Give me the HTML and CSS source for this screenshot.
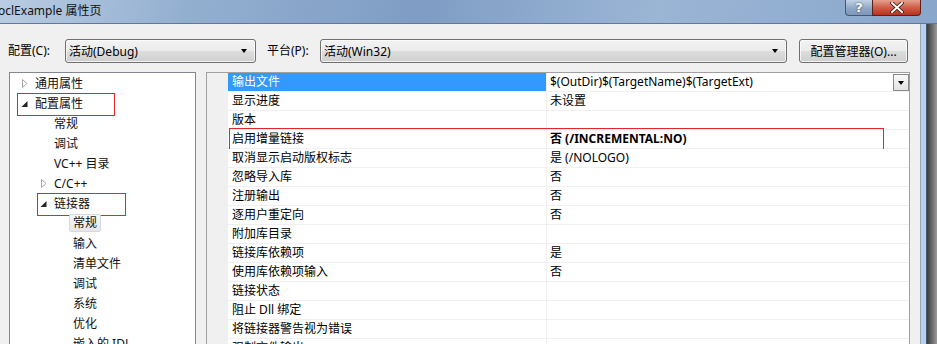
FILE: index.html
```html
<!DOCTYPE html>
<html>
<head>
<title>oclExample 属性页</title>
<link rel="stylesheet" href="styles.css">
</head>
<body>

<div class="titlebar">
  <span class="title">oclExample 属性页</span>
  <div class="caption-buttons">
    <span class="cap-btn help">?</span>
    <span class="cap-btn close">
      <svg width="14" height="11" viewBox="0 0 14 11"><path d="M2 1 L12 10 M12 1 L2 10" stroke="#3a1410" stroke-width="3.6" stroke-linecap="round"/><path d="M2 1 L12 10 M12 1 L2 10" stroke="#fff" stroke-width="2" stroke-linecap="round"/></svg>
    </span>
  </div>
</div>

<div class="main">
  <div class="dialog">

    <div class="toolbar">
      <label class="field-label label-config">配置(C):</label>
      <div class="combo combo-config"><span>活动(Debug)</span><i class="arrow"></i></div>
      <label class="field-label label-platform">平台(P):</label>
      <div class="combo combo-platform"><span>活动(Win32)</span><i class="arrow"></i></div>
      <div class="button">配置管理器(O)...</div>
    </div>

    <div class="panes">
      <div class="tree">
        <div class="node level0"><span class="twisty"><svg width="7" height="9"><path d="M1.5 0.5 L6 4.5 L1.5 8.5 Z" fill="#fff" stroke="#a6a6a6"/></svg></span>通用属性</div>
        <div class="node level0 marked marked-config"><span class="twisty"><svg width="7" height="9"><path d="M6.5 2 L6.5 8 L0.5 8 Z" fill="#262626"/></svg></span>配置属性</div>
        <div class="node level1"><span class="twisty"></span>常规</div>
        <div class="node level1"><span class="twisty"></span>调试</div>
        <div class="node level1"><span class="twisty"></span>VC++ 目录</div>
        <div class="node level1"><span class="twisty"><svg width="7" height="9"><path d="M1.5 0.5 L6 4.5 L1.5 8.5 Z" fill="#fff" stroke="#a6a6a6"/></svg></span>C/C++</div>
        <div class="node level1 marked marked-linker"><span class="twisty"><svg width="7" height="9"><path d="M6.5 2 L6.5 8 L0.5 8 Z" fill="#262626"/></svg></span>链接器</div>
        <div class="node level2"><span class="twisty"></span><span class="current">常规</span></div>
        <div class="node level2"><span class="twisty"></span>输入</div>
        <div class="node level2"><span class="twisty"></span>清单文件</div>
        <div class="node level2"><span class="twisty"></span>调试</div>
        <div class="node level2"><span class="twisty"></span>系统</div>
        <div class="node level2"><span class="twisty"></span>优化</div>
        <div class="node level2"><span class="twisty"></span>嵌入的 IDL</div>
      </div>

      <div class="grid">
        <div class="prop selected">
          <div class="prop-name">输出文件</div>
          <div class="prop-value">$(OutDir)$(TargetName)$(TargetExt)<span class="drop"><i class="arrow"></i></span></div>
        </div>
        <div class="prop"><div class="prop-name">显示进度</div><div class="prop-value">未设置</div></div>
        <div class="prop"><div class="prop-name">版本</div><div class="prop-value"></div></div>
        <div class="prop marked-row"><div class="prop-name">启用增量链接</div><div class="prop-value changed">否 (/INCREMENTAL:NO)</div></div>
        <div class="prop"><div class="prop-name">取消显示启动版权标志</div><div class="prop-value">是 (/NOLOGO)</div></div>
        <div class="prop"><div class="prop-name">忽略导入库</div><div class="prop-value">否</div></div>
        <div class="prop"><div class="prop-name">注册输出</div><div class="prop-value">否</div></div>
        <div class="prop"><div class="prop-name">逐用户重定向</div><div class="prop-value">否</div></div>
        <div class="prop"><div class="prop-name">附加库目录</div><div class="prop-value"></div></div>
        <div class="prop"><div class="prop-name">链接库依赖项</div><div class="prop-value">是</div></div>
        <div class="prop"><div class="prop-name">使用库依赖项输入</div><div class="prop-value">否</div></div>
        <div class="prop"><div class="prop-name">链接状态</div><div class="prop-value"></div></div>
        <div class="prop"><div class="prop-name">阻止 Dll 绑定</div><div class="prop-value"></div></div>
        <div class="prop"><div class="prop-name">将链接器警告视为错误</div><div class="prop-value"></div></div>
        <div class="prop"><div class="prop-name">强制文件输出</div><div class="prop-value"></div></div>
      </div>
    </div>

  </div>
  <div class="frame"></div>
  <div class="desktop"></div>
</div>

</body>
</html>
```

FILE: styles.css
```css
body {
  margin: 0;
  width: 937px;
  height: 344px;
  overflow: hidden;
  font: normal 12px "Noto Sans", "Noto Sans CJK SC", sans-serif;
  color: #000;
  background: #3b4452;
}

/* window caption */

.titlebar {
  display: flex;
  align-items: flex-start;
  height: 23px;
  border-bottom: 1px solid #62789a;
  padding-right: 16px;
  background: linear-gradient(100deg, #b9cce2 0%, #93afd0 20%, #7f9dc4 45%, #9bb5d5 70%, #89a6cb 100%);
}

.title {
  margin-left: -2px;
  line-height: 21px;
  color: #111;
}

.caption-buttons {
  display: flex;
  margin-left: auto;
}

.cap-btn {
  display: flex;
  align-items: center;
  justify-content: center;
  height: 15px;
  border: 1px solid #46586f;
  border-top: none;
}

.help {
  width: 26px;
  border-radius: 0 0 0 4px;
  border-right: none;
  background: linear-gradient(#c3d2e4, #8fa7c6 55%, #7d97ba);
  color: #fff;
  font: bold 13px "DejaVu Sans", sans-serif;
  text-shadow: 0 0 2px #23344d;
}

.close {
  width: 47px;
  border-color: #5b2119;
  border-radius: 0 0 4px 0;
  background: linear-gradient(#e4a18f, #cf5e47 50%, #b8321e);
}

/* dialog body */

.main {
  display: flex;
  height: 320px;
}

.dialog {
  width: 920px;
  background: #f0f0f0;
  border-right: 1px solid #9aa6b4;
}

.frame {
  width: 5px;
  background: #b5d1f2;
  border-right: 1px solid #4a5566;
}

.desktop {
  flex: 1;
  background: linear-gradient(90deg, #3a3a3a, #9b9b9b);
}

.toolbar {
  display: flex;
  align-items: center;
  padding: 15px 0 0 8px;
}

.field-label {
  line-height: 24px;
}

.label-config {
  width: 57px;
}

.label-platform {
  width: 53px;
  margin-left: 11px;
}

.combo, .button {
  display: flex;
  align-items: center;
  box-sizing: border-box;
  height: 24px;
  border: 1px solid #707070;
  border-radius: 3px;
  background: linear-gradient(#f3f3f3 0%, #ebebeb 48%, #dddddd 52%, #cfcfcf 100%);
  box-shadow: inset 0 0 0 1px rgba(255, 255, 255, 0.7);
}

.combo {
  padding: 0 8px 0 3px;
}

.combo span {
  flex: 1;
}

.combo-config {
  width: 191px;
}

.combo-platform {
  width: 467px;
}

.button {
  width: 109px;
  margin-left: 12px;
  justify-content: center;
}

.arrow {
  width: 0;
  height: 0;
  border-left: 3.5px solid transparent;
  border-right: 3.5px solid transparent;
  border-top: 4px solid #000;
}

.panes {
  display: flex;
  margin-top: 9px;
  height: 300px;
  overflow: hidden;
}

/* category tree */

.tree {
  width: 185px;
  height: 320px;
  margin-left: 9px;
  border: 1px solid #828790;
  background: #fff;
}

.node {
  display: flex;
  align-items: center;
  position: relative;
  height: 20px;
  white-space: nowrap;
  color: #111;
}

.level0 { padding-left: 10px; }
.level1 { padding-left: 29px; }
.level2 { padding-left: 48px; }

.twisty {
  display: flex;
  align-items: center;
  width: 15px;
  height: 20px;
  padding-left: 1px;
  box-sizing: border-box;
}

.current {
  margin-left: -4px;
  padding: 0 3px;
  line-height: 16px;
  border: 1px solid #d9d9d9;
  border-radius: 2px;
  background: linear-gradient(#f7f7f7, #e6e6e6);
}

/* red markup drawn over the screenshot */
.marked::after, .marked-row::after {
  content: "";
  position: absolute;
  top: 0;
  height: 22px;
  box-sizing: border-box;
  border: 1px solid #e3262d;
  pointer-events: none;
}

.marked-config::after {
  left: 7px;
  width: 98px;
  height: 23px;
}

.marked-linker::after {
  left: 27px;
  width: 89px;
  height: 23px;
}

/* property grid */

.grid {
  width: 702px;
  height: 320px;
  margin-left: 10px;
  padding-left: 21px;
  box-sizing: content-box;
  border: 1px solid #a0a0a0;
  background: #f0f0f0;
  width: 681px;
}

.prop {
  display: flex;
  position: relative;
  height: 18px;
  line-height: 18px;
  border-bottom: 1px solid #f0f0f0;
  background: #fff;
  white-space: nowrap;
}

.prop-name {
  width: 318px;
  padding-left: 4px;
  box-sizing: border-box;
}

.prop-value {
  display: flex;
  flex: 1;
  padding-left: 3px;
  border-left: 1px solid #f0f0f0;
}

.selected .prop-name {
  background: #3399ff;
  color: #fff;
}

.changed {
  font-weight: bold;
}

.drop {
  display: flex;
  align-items: center;
  justify-content: center;
  box-sizing: border-box;
  width: 16px;
  height: 17px;
  margin: 1px 0 0 auto;
  border: 1px solid #8a8a8a;
  background: linear-gradient(#fafafa, #e2e2e2);
}

.marked-row::after {
  top: -2px;
  left: 1px;
  width: 655px;
  height: 25px;
}
```
